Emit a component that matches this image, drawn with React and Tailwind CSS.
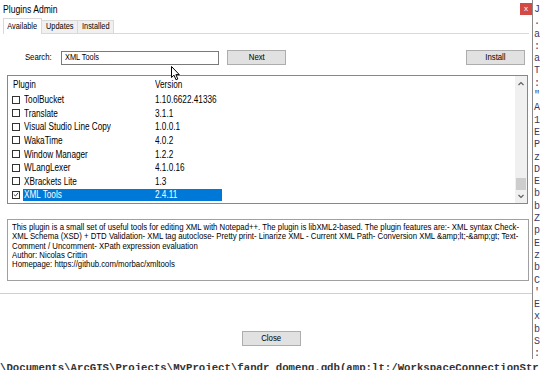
import React from 'react'

const plugins = [
  ['ToolBucket', '1.10.6622.41336'],
  ['Translate', '3.1.1'],
  ['Visual Studio Line Copy', '1.0.0.1'],
  ['WakaTime', '4.0.2'],
  ['Window Manager', '1.2.2'],
  ['WLangLexer', '4.1.0.16'],
  ['XBrackets Lite', '1.3'],
  ['XML Tools', '2.4.11', true],
  ['XPatcher', '1.0.0'],
]

const codeEdge = ['Je', '.:', 'a:', ':', "a'", 'T', '::', '".', 'Aw', "1'", 'E:', 'P:', 'z:', 'DE', 'E:', 'b:', 'b:', 'Z:', 'p:', 'E:', 'z:', 'b:', 'C:', "'.", 'E:', 'x:', 'b:', 'S:', '::', 'Z:']

// the screenshot is squeezed sideways, so the text is too
function T({ children, className = 'origin-left' }) {
  return <span className={'inline-block whitespace-nowrap scale-x-[0.82] ' + className}>{children}</span>
}

function Checkbox({ checked }) {
  return (
    <span className="w-2 h-2 border border-[#333] bg-white flex items-center justify-center shrink-0">
      {checked && (
        <svg width="7" height="7" viewBox="0 0 7 7">
          <path d="M1 3.5 L2.8 5.3 L6 1.5" stroke="#222" strokeWidth="1" fill="none" />
        </svg>
      )}
    </span>
  )
}

function Btn({ children, className = '' }) {
  return (
    <div className={'h-[15px] bg-[#e1e1e1] border border-[#adadad] flex items-center justify-center text-[9.5px] text-black ' + className}>
      <T className="origin-center">{children}</T>
    </div>
  )
}

const descLines = [
  'This plugin is a small set of useful tools for editing XML with Notepad++. The plugin is libXML2-based. The plugin features are:- XML syntax Check-',
  'XML Schema (XSD) + DTD Validation- XML tag autoclose- Pretty print- Linarize XML - Current XML Path- Conversion XML &amp;lt;-&amp;gt; Text-',
  'Comment / Uncomment- XPath expression evaluation',
  'Author: Nicolas Crittin',
  'Homepage: https://github.com/morbac/xmltools',
]

export default function App() {
  return (
    <div className="w-[540px] h-[370px] overflow-hidden bg-white relative font-['Liberation_Sans',sans-serif] text-black">
      <div className="flex h-[359px]">
        {/* dialog */}
        <div className="w-[533px] h-full bg-white border-r border-[#8a8a8a] flex flex-col shrink-0">
          {/* title bar */}
          <div className="h-[19px] flex items-start justify-between">
            <span className="text-[10.5px] ml-[3px] mt-[3px] leading-[12px]"><T>Plugins Admin</T></span>
            <div className="w-[12px] h-[12px] mt-[3px] bg-[#d24a43] text-white text-[8px] leading-[11px] text-center">x</div>
          </div>
          {/* tabs */}
          <div className="h-[15px] flex items-end border-b border-[#d9d9d9] mx-[3px]">
            <div className="w-[39px] h-[16px] -mb-px bg-white border border-b-0 border-[#d9d9d9] flex items-center justify-center text-[9px]"><T className="origin-center">Available</T></div>
            <div className="w-[36px] h-[13px] bg-[#f0f0f0] border border-b-0 border-l-0 border-[#d9d9d9] flex items-center justify-center text-[9px]"><T className="origin-center">Updates</T></div>
            <div className="w-[36px] h-[13px] bg-[#f0f0f0] border border-b-0 border-l-0 border-[#d9d9d9] flex items-center justify-center text-[9px]"><T className="origin-center">Installed</T></div>
          </div>
          {/* tab page */}
          <div className="h-[260px] border-b border-[#d0d0d0] flex flex-col">
            <div className="flex items-center mt-[16px] h-[15px]">
              <span className="w-[52px] text-right text-[9.5px]"><T className="origin-right">Search:</T></span>
              <div className="ml-[9px] w-[158px] h-[14px] border border-[#7a7a7a] flex items-center px-[3px] text-[9px]"><T>XML Tools</T></div>
              <Btn className="ml-[8px] w-[59px]">Next</Btn>
              <div className="flex-1" />
              <Btn className="w-[59px] mr-[7px]">Install</Btn>
            </div>
            {/* list */}
            <div className="mt-[10px] ml-[7px] w-[521px] h-[129px] border border-[#828790] flex overflow-hidden">
              <div className="flex-1 flex flex-col">
                <div className="h-[17px] flex items-center text-[10px] shrink-0">
                  <span className="w-[142px] ml-[5px]"><T>Plugin</T></span>
                  <span><T>Version</T></span>
                </div>
                {plugins.map(([name, ver, sel]) => (
                  <div key={name} className="h-[13.57px] flex items-center shrink-0 text-[10px]">
                    <span className="ml-[4px]"><Checkbox checked={sel} /></span>
                    <div className={'ml-[3px] w-[199px] h-[12px] flex items-center ' + (sel ? 'bg-[#0078d7] text-white' : '')}>
                      <span className="w-[131px] ml-[1px] shrink-0"><T>{name}</T></span>
                      <span className="shrink-0"><T>{ver}</T></span>
                    </div>
                  </div>
                ))}
              </div>
              {/* scrollbar */}
              <div className="w-[12px] bg-[#f0f0f0] flex flex-col items-center">
                <svg width="8" height="12" viewBox="0 0 8 12" className="mt-[2px]">
                  <path d="M1.5 7 L4 4.5 L6.5 7" stroke="#606060" strokeWidth="1.2" fill="none" />
                </svg>
                <div className="flex-1" />
                <div className="w-[10px] h-[12px] bg-[#cdcdcd]" />
                <svg width="8" height="12" viewBox="0 0 8 12" className="mb-[1px]">
                  <path d="M1.5 5 L4 7.5 L6.5 5" stroke="#606060" strokeWidth="1.2" fill="none" />
                </svg>
              </div>
            </div>
            {/* description */}
            <div className="mt-[15px] ml-[7px] w-[522px] h-[62px] border border-[#a0a0a0] flex">
              <div className="flex-1 pl-[4px] pt-[2px] text-[9.5px] leading-[9.3px]">
                {descLines.map(l => (
                  <div key={l} className="h-[9.3px]"><T>{l}</T></div>
                ))}
              </div>
              <div className="w-[12px] flex flex-col items-center justify-between">
                <svg width="8" height="12" viewBox="0 0 8 12" className="mt-[1px]">
                  <path d="M1.5 7 L4 4.5 L6.5 7" stroke="#c0c0c0" strokeWidth="1.2" fill="none" />
                </svg>
                <svg width="8" height="12" viewBox="0 0 8 12" className="mb-[1px]">
                  <path d="M1.5 5 L4 7.5 L6.5 5" stroke="#c0c0c0" strokeWidth="1.2" fill="none" />
                </svg>
              </div>
            </div>
          </div>
          {/* footer */}
          <div className="flex-1 flex justify-center">
            <Btn className="mt-[37px] w-[59px] ml-[10px]">Close</Btn>
          </div>
        </div>
        {/* editor behind, right edge */}
        <div className="flex-1 overflow-hidden font-['Liberation_Mono',monospace] text-[10px] leading-[12.3px] text-[#3a3a6a] pt-[4px] pl-[1px]">
          {codeEdge.map((c, i) => (
            <div key={i} className="whitespace-nowrap">{c}</div>
          ))}
        </div>
      </div>
      <div className="h-[11px] overflow-hidden font-['Liberation_Mono',monospace] text-[10.7px] leading-[12px] text-[#333] font-bold whitespace-nowrap">
        <div className="mt-[3px]">\Documents\ArcGIS\Projects\MyProject\fandr_domeng.gdb(amp;lt;/WorkspaceConnectionStr</div>
      </div>
      {/* mouse cursor */}
      <svg className="absolute left-[171px] top-[66px]" width="10" height="15" viewBox="0 0 10 15">
        <path d="M0.5 0.5 L0.5 11.5 L3 9.2 L5 13.8 L6.8 13 L4.9 8.6 L8.3 8.6 Z" fill="white" stroke="black" strokeWidth="1" />
      </svg>
    </div>
  )
}
